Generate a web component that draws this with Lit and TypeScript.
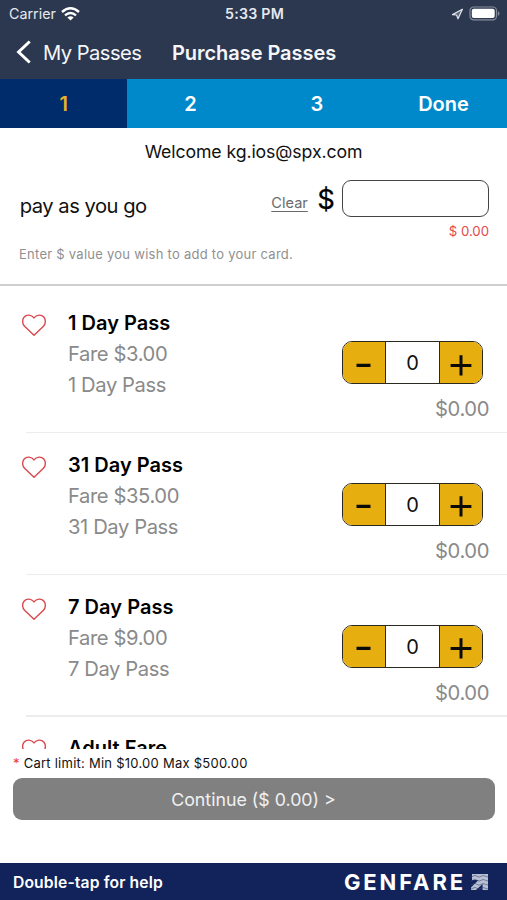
import { LitElement, html, css, svg, nothing } from "lit";
import { customElement, property } from "lit/decorators.js";

@customElement("pass-row")
class PassRow extends LitElement {
  @property() name = "";
  @property() fare = "";
  @property({ type: Boolean }) peek = false;

  static styles = css`
    :host { display: block; flex: none; height: 141.7px; box-sizing: border-box; position: relative; }
    .row { display: flex; height: 141.7px; box-sizing: border-box; padding: 15.5px 18px 0 21px; }
    .rule { position: absolute; left: 26px; right: 0; bottom: 0; height: 1.5px; background: #ececec; }
    .heart { width: 26px; height: 24px; margin-top: 6px; flex: none; fill: none; stroke: #d8494d; stroke-width: 1.4; }
    .info { margin-left: 21px; flex: 1; font-size: 20.2px; line-height: 31px; color: #8a8a8a; white-space: nowrap; letter-spacing: -0.4px; }
    .name { font-weight: 600; color: #000; font-size: 20px; letter-spacing: 0.03px; padding-top: 1px; margin-bottom: -1px; }
    .side { display: flex; flex-direction: column; align-items: flex-end; padding-top: 34px; }
    .stepper { display: flex; width: 141px; height: 43px; box-sizing: border-box; margin-right: 6px; border: 1.5px solid #2c2a20; border-radius: 10px; overflow: hidden; background: #fff; }
    .btn { width: 42px; background: #e7ae10; display: flex; justify-content: center; align-items: center; }
    .btn svg { width: 24px; height: 24px; margin-top: 4px; stroke: #0b0b08; fill: none; }
    .count { flex: 1; border: solid #2c2a20; border-width: 0 1.5px; text-align: center; font-size: 20px; line-height: 43px; color: #111; }
    .price { font-size: 20.2px; line-height: 30px; margin-top: 10px; color: #8a8a8a; letter-spacing: -0.4px; }
  `;

  render() {
    return html`
      <div class="row">
        <svg class="heart" viewBox="0 0 26 24"><path d="M13 22.3L3.8 13.5C0.9 10.7 1.2 6.5 3 4.2C5.6 1.2 10.5 1.4 13 4.9C15.5 1.4 20.4 1.2 23 4.2C24.8 6.5 25.1 10.7 22.2 13.5Z" stroke-linejoin="round"/></svg>
        <div class="info">
          <div class="name">${this.name}</div>
          ${this.peek ? nothing : html`<div>Fare ${this.fare}</div><div>${this.name}</div>`}
        </div>
        ${this.peek ? nothing : html`<div class="side">
          <div class="stepper">
            <div class="btn"><svg viewBox="0 0 24 24" stroke-width="3.2"><path d="M4.5 12.3H18.5"/></svg></div>
            <div class="count">0</div>
            <div class="btn"><svg viewBox="0 0 24 24" stroke-width="3"><path d="M1.6 12.4H22.4M12 2.2V22.6"/></svg></div>
          </div>
          <div class="price">$0.00</div>
        </div>`}
      </div>
      ${this.peek ? nothing : html`<div class="rule"></div>`}
    `;
  }
}

@customElement("app-root")
class AppRoot extends LitElement {
  static styles = css`
    :host { display: flex; flex-direction: column; height: 900px; overflow: hidden; background: #fff; font-family: Inter, "Liberation Sans", sans-serif; color: #111; white-space: nowrap; }
    .top { flex: none; height: 79px; background: #2c3850; color: #f4f6fa; }
    .status { display: grid; grid-template-columns: 1fr auto 1fr; height: 27px; align-items: center; padding: 0 7px 0 9px; font-size: 14.3px; color: #e6e9ef; }
    .carrier { display: flex; align-items: center; gap: 5px; letter-spacing: 0; }
    .wifi { width: 19px; height: 14px; fill: none; stroke: #fff; stroke-width: 2.4; }
    .time { font-weight: 600; font-size: 14.2px; letter-spacing: 0.25px; }
    .power { display: flex; align-items: center; justify-content: flex-end; gap: 6px; }
    .loc { width: 12px; height: 12px; fill: #5d6779; stroke: #dfe3ea; stroke-width: 1.2; stroke-linejoin: round; }
    .battery { width: 31px; height: 15px; }
    .nav { display: flex; height: 50px; align-items: center; padding-left: 16px; font-size: 20.2px; }
    .back { width: 16px; height: 24px; fill: none; stroke: #fff; stroke-width: 3; }
    .prev { width: 129px; margin-left: 11px; letter-spacing: -0.55px; }
    .title { font-weight: 600; font-size: 20px; letter-spacing: -0.05px; padding-top: 1px; }
    .steps { flex: none; height: 48.5px; display: grid; grid-template: 48.5px / 127.4px 1fr 1fr 127px; background: #0089ca; color: #fff; font-weight: 600; font-size: 20px; line-height: 50px; text-align: center; overflow: hidden; }
    .current { background: #002c6c; color: #e7b425; }
    .welcome { flex: none; text-align: center; font-size: 17.7px; line-height: 30px; padding-top: 9px; height: 39px; box-sizing: border-box; letter-spacing: -0.1px; }
    .payg { flex: none; height: 119.3px; box-sizing: border-box; border-bottom: 2.4px solid #cfcfcf; padding: 13px 18px 0 19px; }
    .amount { display: flex; height: 38px; }
    .label { font-size: 20.2px; line-height: 26px; margin-top: 13px; flex: 1; letter-spacing: -0.5px; padding-left: 0.7px; }
    .clear { font-size: 14.6px; line-height: 20px; margin-top: 13px; height: 20px; color: #6b6b6b; text-decoration: underline; text-underline-offset: 2.5px; }
    .dollar { font-size: 27.5px; line-height: 38px; margin: 0 7px 0 9.5px; color: #000; -webkit-text-stroke: 0.2px #000; }
    .field { width: 147px; height: 37px; box-sizing: border-box; border: 1.5px solid #444; border-radius: 9px; }
    .sum { text-align: right; font-size: 13.2px; line-height: 18px; margin-top: 4px; color: #e2474c; }
    .hint { font-size: 13px; line-height: 18px; margin-top: 5px; color: #909090; letter-spacing: 0.26px; }
    .list { flex: none; height: 463.2px; box-sizing: border-box; padding-top: 6px; overflow: hidden; display: flex; flex-direction: column; }
    .limit { flex: none; font-size: 13px; line-height: 18px; margin: 5.5px 0 0 13px; height: 23.5px; letter-spacing: 0.25px; }
    .star { color: #f0382c; }
    .go { flex: none; height: 42.5px; margin: 0 12.5px; border-radius: 9px; background: #808080; color: #f1f1f1; font-size: 17.8px; line-height: 43px; text-align: center; }
    .foot { margin-top: auto; flex: none; height: 37px; display: flex; align-items: center; justify-content: space-between; padding: 0 18px 0 13px; background: #11235a; color: #fff; font-size: 15.7px; font-weight: 600; }
    .help { letter-spacing: 0.12px; padding-top: 1px; }
    .brand { display: flex; align-items: center; gap: 4px; font-size: 22px; font-weight: 700; letter-spacing: 2.9px; }
    .mark { width: 19px; height: 18px; }
  `;

  render() {
    const passes = [["1 Day Pass", "$3.00"], ["31 Day Pass", "$35.00"], ["7 Day Pass", "$9.00"]];
    return html`
      <div class="top">
        <div class="status">
          <div class="carrier"><span>Carrier</span>
            <svg class="wifi" viewBox="0 0 19 14"><path d="M1 5Q9.5 -2.4 18 5M4 8.4Q9.5 3.6 15 8.4"/><path d="M6.4 10.5Q9.5 8 12.6 10.5L9.5 13.6Z" fill="#fff" stroke="none"/></svg>
          </div>
          <div class="time">5:33 PM</div>
          <div class="power">
            <svg class="loc" viewBox="0 0 12 12"><path d="M11.4 1.2L1.5 6.6L5.6 7L7 10.8Z"/></svg>
            <svg class="battery" viewBox="0 0 31 15"><rect x="1" y="1" width="26.5" height="12.8" rx="3.6" fill="none" stroke="#858c9b" stroke-width="1.2"/><rect x="2.8" y="2.8" width="22.9" height="9.2" rx="2" fill="#fff"/><path d="M28.9 5V10Q30.5 9 30.5 7.5T28.9 5Z" fill="#858c9b"/></svg>
          </div>
        </div>
        <div class="nav">
          <svg class="back" viewBox="0 0 16 24"><path d="M13.7 1.5L2.6 12L13.7 22.5"/></svg>
          <div class="prev">My Passes</div>
          <div class="title">Purchase Passes</div>
        </div>
      </div>
      <div class="steps"><div class="current">1</div><div>2</div><div>3</div><div>Done</div></div>
      <div class="welcome">Welcome kg.ios@spx.com</div>
      <div class="payg">
        <div class="amount">
          <div class="label">pay as you go</div>
          <div class="clear">Clear</div>
          <div class="dollar">$</div>
          <div class="field"></div>
        </div>
        <div class="sum">$ 0.00</div>
        <div class="hint">Enter $ value you wish to add to your card.</div>
      </div>
      <div class="list">
        ${passes.map(([n, f]) => html`<pass-row .name=${n} .fare=${f}></pass-row>`)}
        <pass-row name="Adult Fare" peek></pass-row>
      </div>
      <div class="limit"><span class="star">*</span> Cart limit: Min $10.00 Max $500.00</div>
      <div class="go">Continue ($ 0.00) &gt;</div>
      <div class="foot">
        <div class="help">Double-tap for help</div>
        <div class="brand"><span>GENFARE</span>
          <svg class="mark" viewBox="0 0 19 18">
            <path d="M2 1H18V17H12.6V11L6 17H1V14.5L8.5 7H2Z" fill="#b9c0d3"/>
            ${[0, 1, 2, 3].map(i => svg`<path d=${`M1 ${4 + i * 4}L5 ${2.4 + i * 4}L9 ${4.2 + i * 4}L13 ${2.5 + i * 4}L18 ${4 + i * 4}`} fill="none" stroke="#3c4a78" stroke-width="0.6"/>`)}
          </svg>
        </div>
      </div>
    `;
  }
}
